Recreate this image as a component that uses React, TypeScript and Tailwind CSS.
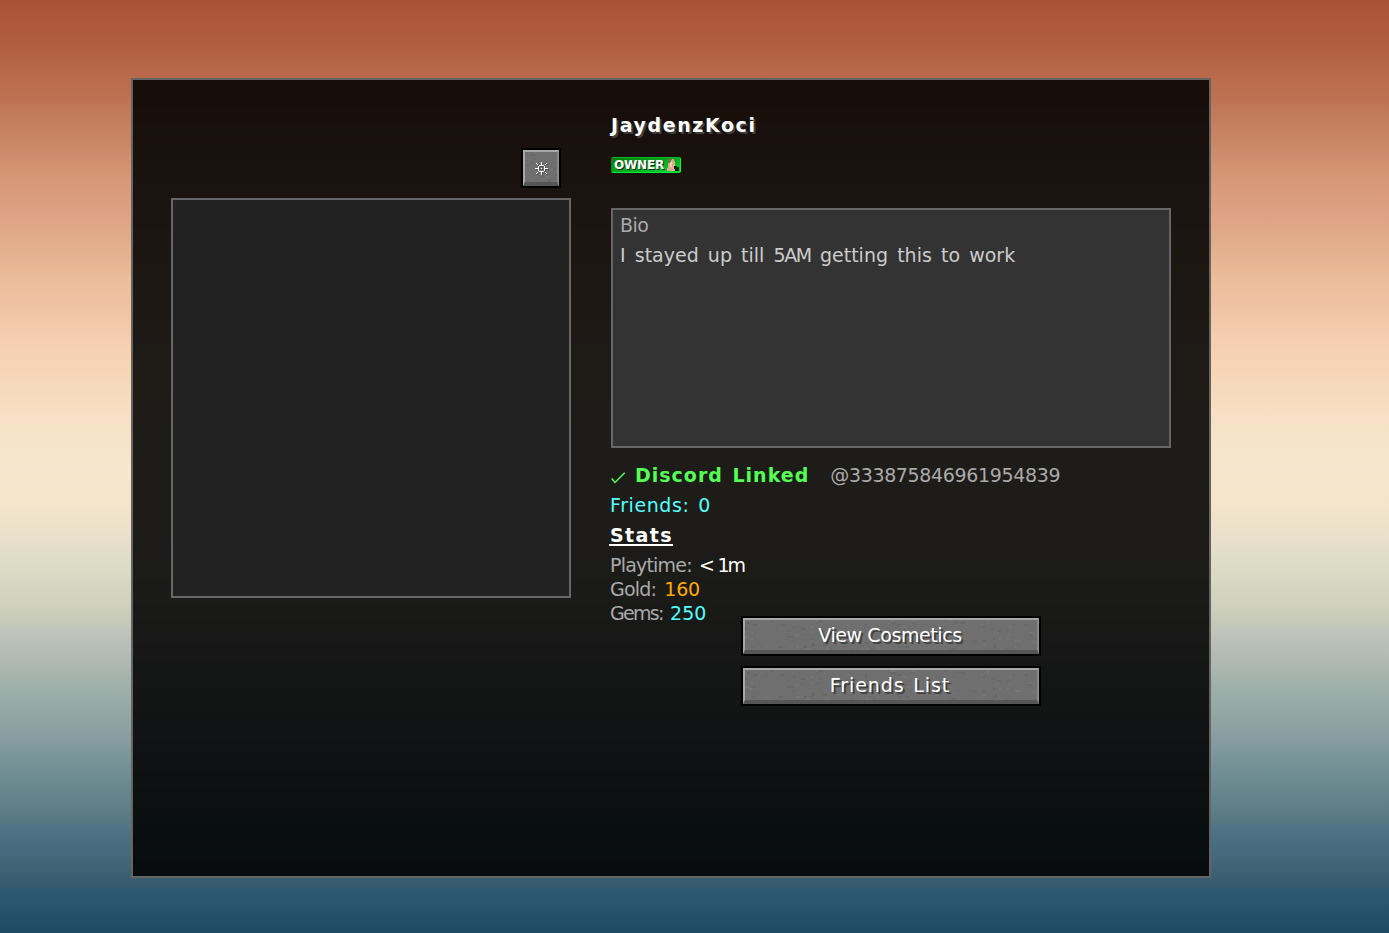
import clsx from "clsx";
import { ReactNode } from "react";

type StoneProps = { width: number; height: number; seed: number };

const STONE_SHADES = ["#7c7c7c", "#656565", "#767676", "#606060"];

function Stone({ width, height, seed }: StoneProps) {
  let state = seed;
  const next = () => {
    state = (state * 16807) % 2147483647;
    return state / 2147483647;
  };

  const specks = Array.from({ length: Math.round((width * height) / 50) }, () => ({
    x: Math.floor((next() * width) / 2) * 2,
    y: Math.floor((next() * height) / 2) * 2,
    w: 2 + Math.floor(next() * 2) * 2,
    fill: STONE_SHADES[Math.floor(next() * STONE_SHADES.length)],
  }));

  return (
    <svg
      className="absolute inset-0"
      width={width}
      height={height}
      shapeRendering="crispEdges"
    >
      {specks.map((s, i) => (
        <rect key={i} x={s.x} y={s.y} width={s.w} height={2} fill={s.fill} opacity={0.45} />
      ))}
    </svg>
  );
}

type StoneButtonProps = {
  children: ReactNode;
  className: string;
  width: number;
  seed: number;
};

function StoneButton({ children, className, width, seed }: StoneButtonProps) {
  return (
    <button
      type="button"
      className={clsx(
        "relative h-[40px] border-2 border-black bg-[#6f6f6f] text-white",
        className
      )}
    >
      <Stone width={width - 4} height={36} seed={seed} />
      <span className="absolute inset-0 border-2 border-b-4 border-t-[#a8a8a8] border-l-[#a8a8a8] border-r-[#8b8b8b] border-b-[#565656]" />
      <span className="relative flex h-full items-center justify-center pr-[2px] pb-[2px]">
        {children}
      </span>
    </button>
  );
}

const GEAR =
  "M6 0h1v3h-1zM6 10h1v3h-1zM0 6h3v1h-3zM10 6h3v1h-3zM4 3h5v1h-5zM4 9h5v1h-5zM3 4h1v5h-1zM9 4h1v5h-1zM6 6h1v1h-1zM1 1h1v1h-1zM2 2h1v1h-1zM11 1h1v1h-1zM10 2h1v1h-1zM1 11h1v1h-1zM2 10h1v1h-1zM11 11h1v1h-1zM10 10h1v1h-1z";

function GearIcon() {
  return (
    <svg
      className="mt-[4px] ml-[4px]"
      width="14"
      height="14"
      viewBox="0 0 14 14"
      shapeRendering="crispEdges"
    >
      <path d={GEAR} fill="#505050" transform="translate(1 1)" />
      <path d={GEAR} fill="#fff" />
    </svg>
  );
}

function CheckIcon() {
  return (
    <svg className="mt-[5px]" width="15" height="12" viewBox="0 0 15 12" fill="none">
      <path d="M.7 6.5l3.3 4L13.7.7" stroke="#55ff55" strokeWidth="1.5" />
    </svg>
  );
}

function OwnerBadge() {
  return (
    <div className="flex h-[16px] w-[70px] items-center rounded-[2px] border border-t-[#00b82c] border-r-[#00ff40] border-b-[#00ee3c] border-l-[#078a12] bg-gradient-to-br from-[#067a08] to-[#04d832] pl-[2px]">
      <span className="font-['DejaVu_Sans'] text-[12px] leading-none font-bold tracking-[-0.2px] text-white [text-shadow:1px_1px_0_#102010]">
        OWNER
      </span>
      <svg className="ml-auto" width="14" height="14" viewBox="0 0 14 14" shapeRendering="crispEdges">
        <path d="M3 1h5v2h1v5h-1v3h2v2h-9v-3h1v-5h1z" fill="#d9ad8c" />
        <path d="M3 1h3v1h-1v3h-2z" fill="#8d6b4f" />
        <path d="M4 4h2v5h-2z" fill="#f0cbb0" />
        <path d="M8 8h3v1h2v4h-4v-2h-1z" fill="#12240f" />
      </svg>
    </div>
  );
}

export default function App() {
  return (
    <div className="h-[933px] w-[1389px] overflow-hidden bg-[linear-gradient(180deg,#a95335_0px,#b05c3e_40px,#ba6a4b_75px,#bc7151_95px,#c68263_130px,#d69878_180px,#dfa284_215px,#e1ac8a_240px,#edbf9c_285px,#efc0a3_300px,#f6ceb1_340px,#f6d7b8_375px,#f9e0c6_421px,#f4e3c5_425px,#f6e6cd_465px,#f3e6cb_500px,#eadfcb_540px,#e0dec9_556px,#d1d3bf_600px,#c6c9b8_624px,#c0c4bd_630px,#b0bab2_660px,#a2b2ac_680px,#94a8a4_710px,#8a9ca2_738px,#7a979a_755px,#69898f_785px,#56797f_821px,#4f7488_827px,#436779_860px,#38596f_885px,#2c5a70_893px,#1e4b64_933px)] pt-[78px] pl-[131px] font-['DejaVu_Sans','Liberation_Sans',sans-serif] text-[19px]">
      <main className="flex h-[800px] w-[1080px] gap-[40px] border-2 border-[#666461] bg-black/88 pl-[38px]">
        <section className="flex w-[400px] flex-col items-end gap-[10px] pt-[68px]">
          <StoneButton className="mr-[10px] w-[40px]" width={40} seed={71}>
            <GearIcon />
          </StoneButton>
          <div className="h-[400px] w-[400px] border-2 border-[#666] bg-[#222]" />
        </section>

        <section className="flex w-[560px] flex-col pt-[30px] whitespace-nowrap">
          <h1 className="h-[30px] leading-[31px] font-bold tracking-[1.6px] text-white [text-shadow:2px_2px_0_#3f3f3f]">
            JaydenzKoci
          </h1>
          <div className="mt-[17px]">
            <OwnerBadge />
          </div>

          <div className="mt-[35px] h-[240px] border-2 border-[#666] bg-[#333] px-[7px] leading-[30px]">
            <h2 className="tracking-[-0.5px] text-[#aaa]">Bio</h2>
            <p className="text-[#ccc] [word-spacing:3.1px]">
              I stayed up till <span className="tracking-[-1.4px]">5AM</span>{" "}
              getting this to work
            </p>
          </div>

          <div className="mt-[12px] flex h-[30px] items-center">
            <CheckIcon />
            <span className="ml-[9px] font-bold tracking-[1px] text-[#55ff55] [word-spacing:2px]">
              Discord Linked
            </span>
            <span className="ml-[21px] tracking-[-0.35px] text-[#aaa]">
              @333875846961954839
            </span>
          </div>
          <div className="-ml-px">
            <p className="h-[30px] leading-[30px] tracking-[0.6px] text-[#55ffff] [word-spacing:2px]">
              Friends: 0
            </p>
            <h2 className="-ml-px h-[33px] leading-[30px] font-bold tracking-[1.4px] text-white">
              <span className="inline-block h-[26px] w-[64px] border-b-2 border-white pl-px">
                Stats
              </span>
            </h2>
            <p className="h-[24px] leading-[24px] tracking-[-0.8px] text-[#aaa] [word-spacing:2px]">
              Playtime:{" "}
              <span className="tracking-[-2.2px] text-white [word-spacing:1px]">
                &lt; 1m
              </span>
            </p>
            <p className="h-[24px] leading-[24px] tracking-[-0.8px] text-[#aaa] [word-spacing:3px]">
              Gold: <span className="tracking-[-0.2px] text-[#ffaa00]">160</span>
            </p>
            <p className="h-[24px] leading-[24px] tracking-[-1.7px] text-[#aaa] [word-spacing:3px]">
              Gems: <span className="tracking-[0px] text-[#55ffff]">250</span>
            </p>
          </div>

          <div className="-mt-[9px] flex flex-col items-center gap-[10px]">
            <StoneButton className="w-[300px]" width={300} seed={1234}>
              <span className="tracking-[-0.4px] [text-shadow:2px_2px_0_#3f3f3f]">
                View Cosmetics
              </span>
            </StoneButton>
            <StoneButton className="w-[300px]" width={300} seed={1234}>
              <span className="tracking-[0.9px] [text-shadow:2px_2px_0_#3f3f3f] [word-spacing:2px]">
                Friends List
              </span>
            </StoneButton>
          </div>
        </section>
      </main>
    </div>
  );
}
